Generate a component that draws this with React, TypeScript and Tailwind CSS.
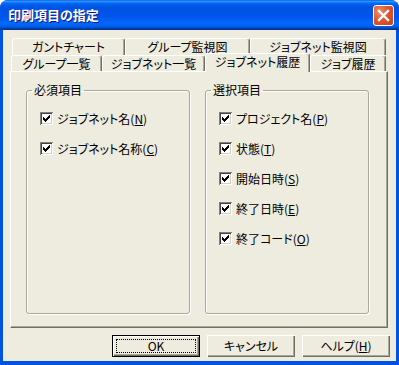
import React from "react";

const CHECK = ["......X", ".....XX", "X...XXX", "XX.XXX.", "XXXXX..", ".XXX...", "..X...."];

function CheckBox() {
  const rects: React.ReactElement[] = [];
  CHECK.forEach((row, y) =>
    row.split("").forEach((c, x) => {
      if (c === "X") rects.push(<rect key={`${x}-${y}`} x={x + 3} y={y + 3} width={1} height={1} fill="#000" />);
    })
  );
  return (
    <span className="block w-[13px] h-[13px] shrink-0 bg-white shadow-[inset_1px_1px_0_#808080,inset_-1px_-1px_0_#ffffff,inset_2px_2px_0_#404040,inset_-2px_-2px_0_#d4d0c8]">
      <svg width="13" height="13" viewBox="0 0 13 13" shapeRendering="crispEdges" className="block">
        {rects}
      </svg>
    </span>
  );
}

function Item({ label, k }: { label: string; k: string }) {
  return (
    <div className="flex items-center h-[13px] gap-[4px]">
      <CheckBox />
      <span className="text-[12px] leading-[13px] whitespace-nowrap">
        {label}(<span className="underline underline-offset-[1px]">{k}</span>)
      </span>
    </div>
  );
}

function Group({ title, items }: { title: string; items: [string, string][] }) {
  return (
    <fieldset className="w-[164px] h-[231px] rounded-[3px] border border-[#aca899] shadow-[inset_1px_1px_0_#ffffff,1px_1px_0_#ffffff]">
      <legend className="ml-[5px] px-[2px] text-[12px] leading-[14px]">{title}</legend>
      <div className="flex flex-col gap-[17px] pt-[15px] pl-[13px]">
        {items.map(([l, k]) => (
          <Item key={l} label={l} k={k} />
        ))}
      </div>
    </fieldset>
  );
}

function Tab({ label, w, selected = false }: { label: string; w: string; selected?: boolean }) {
  return (
    <div
      className={
        "flex justify-center rounded-t-[3px] border-t border-l border-r border-t-white border-l-white border-r-[#716f64] bg-[#eeebdf] shadow-[inset_-1px_0_0_#aca899] text-[12px] leading-[14px] whitespace-nowrap " +
        w +
        (selected ? " relative z-10 h-[19px] -mb-[1px] pt-[1px]" : " h-full pt-[1px]")
      }
    >
      {label}
    </div>
  );
}

function Button({ children, def = false }: { children: React.ReactNode; def?: boolean }) {
  if (def) {
    return (
      <div className="w-[88px] h-[22px] border border-black">
        <div className="w-full h-full p-[3px] shadow-[inset_1px_1px_0_#ffffff,inset_-1px_-1px_0_#716f64,inset_-2px_-2px_0_#aca899]">
          <div className="w-full h-full border border-dotted border-black flex items-center justify-center text-[12px] leading-[12px]">
            {children}
          </div>
        </div>
      </div>
    );
  }
  return (
    <div className="w-[88px] h-[22px] flex items-center justify-center text-[12px] leading-[12px] shadow-[inset_1px_1px_0_#ffffff,inset_-1px_-1px_0_#716f64,inset_-2px_-2px_0_#aca899]">
      {children}
    </div>
  );
}

export default function App() {
  return (
    <div
      className="w-[399px] h-[365px] flex flex-col rounded-t-[8px] overflow-hidden bg-[#0053e1] text-black [font-feature-settings:'palt']"
      style={{ fontFamily: '"Noto Sans CJK JP", "Noto Sans", sans-serif' }}
    >
      <div className="h-[30px] shrink-0 flex items-center justify-between pl-[8px] pr-[5px] bg-[linear-gradient(180deg,#0058ee_0%,#3593ff_4%,#288eff_6%,#127dff_8%,#036ffc_10%,#0262ee_14%,#0057e5_20%,#0054e3_24%,#0055eb_56%,#005bf5_66%,#026afe_76%,#0062ef_86%,#0052d6_92%,#0040ab_94%,#003092_100%)]">
        <span className="text-white font-bold text-[13px] leading-[14px] [text-shadow:1px_1px_0_#0a1883]">印刷項目の指定</span>
        <div className="w-[21px] h-[21px] rounded-[3px] border border-white bg-[radial-gradient(circle_at_30%_30%,#f0906f_0%,#de5630_45%,#c9401a_100%)] flex items-center justify-center">
          <svg width="13" height="13" viewBox="0 0 13 13">
            <path d="M2 2L11 11M11 2L2 11" stroke="#fff" strokeWidth="2.4" strokeLinecap="square" />
          </svg>
        </div>
      </div>

      <div className="flex-1 mx-[3px] mb-[4px] bg-[#eeebdf] flex flex-col">
        <div className="ml-[7px] w-[378px] pt-[8px] flex flex-col">
          <div className="h-[17px] flex pl-[2px]">
            <Tab label="ガントチャート" w="w-[113px]" />
            <Tab label="グループ監視図" w="w-[125px]" />
            <Tab label="ジョブネット監視図" w="w-[136px]" />
          </div>
          <div className="h-[16px] flex items-end pl-[1px]">
            <Tab label="グループ一覧" w="w-[91px]" />
            <Tab label="ジョブネット一覧" w="w-[103px]" />
            <Tab label="ジョブネット履歴" w="w-[105px]" selected />
            <Tab label="ジョブ履歴" w="w-[76px]" />
          </div>
          <div className="h-[257px] border-t border-l border-r border-b border-t-white border-l-white border-r-[#716f64] border-b-[#716f64] shadow-[inset_-1px_-1px_0_#aca899] flex gap-[15px] pl-[15px] pt-[11px]">
            <Group title="必須項目" items={[["ジョブネット名", "N"], ["ジョブネット名称", "C"]]} />
            <Group
              title="選択項目"
              items={[
                ["プロジェクト名", "P"],
                ["状態", "T"],
                ["開始日時", "S"],
                ["終了日時", "E"],
                ["終了コード", "O"],
              ]}
            />
          </div>
        </div>
        <div className="mt-[7px] flex justify-end gap-[7px] pr-[6px]">
          <Button def>OK</Button>
          <Button>キャンセル</Button>
          <Button>
            ヘルプ(<span className="underline underline-offset-[1px]">H</span>)
          </Button>
        </div>
      </div>
    </div>
  );
}
